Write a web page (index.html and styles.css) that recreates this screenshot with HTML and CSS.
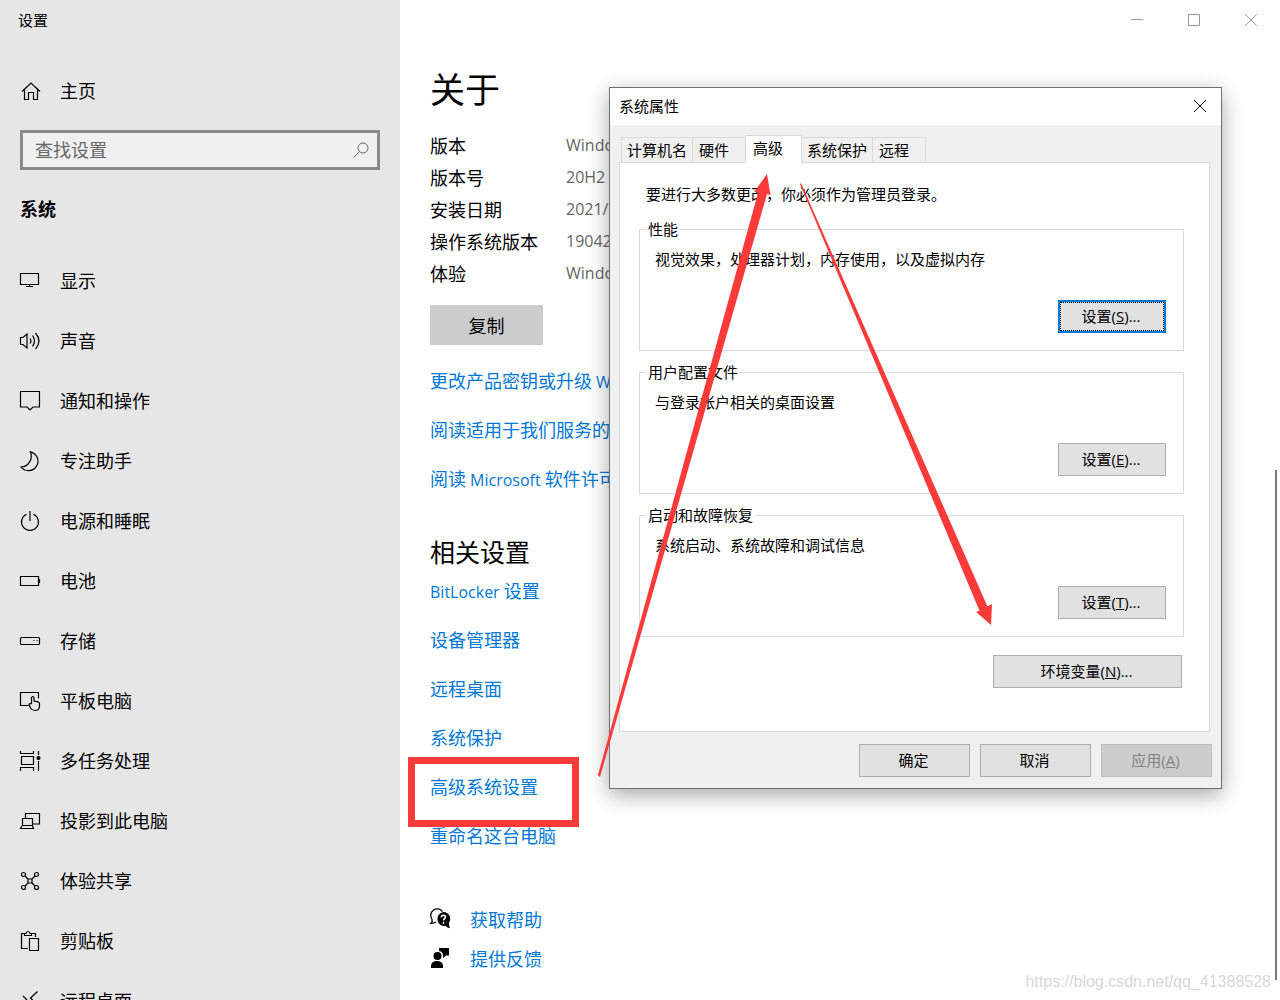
FILE: index.html
```html
<!DOCTYPE html>
<html lang="zh-CN">
<head>
<meta charset="utf-8">
<meta name="viewport" content="width=device-width, initial-scale=1">
<title>设置</title>
<link rel="stylesheet" href="styles.css">
</head>
<body>
<div class="app">
  <aside class="sidebar">
    <div class="app-title">设置</div>
    <a class="nav-item home" href="#home">
      <svg class="icon" viewBox="0 0 20 20"><path d="M2 10.500 11 2l9 8.500M4.500 8.500v10h4v-7h5v7h4v-10"/></svg>
      <span>主页</span>
    </a>
    <div class="search">
      <input class="search-input" type="text" placeholder="查找设置" aria-label="查找设置">
      <svg class="search-icon" viewBox="0 0 16 16"><circle cx="10" cy="6" r="5"/><path d="M6.500 9.500.5 15.500"/></svg>
    </div>
    <h2 class="section-title">系统</h2>
    <nav class="nav">
      <a class="nav-item" href="#display"><svg class="icon" viewBox="0 0 20 20"><path d="M.5 2.500h18v11H.5zM9.500 13.500v2M6 15.500h7"/></svg><span>显示</span></a>
      <a class="nav-item" href="#sound"><svg class="icon" viewBox="0 0 20 20"><path d="M.5 6.500h2.500L7 3v14l-4-3.500H.5zM10 7.500q2 2.500 0 5M12.500 4.500q4 5.500 0 11M15.500 2q7 8 0 16"/></svg><span>声音</span></a>
      <a class="nav-item" href="#notify"><svg class="icon" viewBox="0 0 20 20"><path d="M.5.5h19v15.500h-6.500l-3 3-3-3H.5z"/></svg><span>通知和操作</span></a>
      <a class="nav-item" href="#focus"><svg class="icon" viewBox="0 0 20 20"><path d="M10.300.8A9.500 9.500 0 1 1 1 16 10.800 10.800 0 0 0 10.300.8z"/></svg><span>专注助手</span></a>
      <a class="nav-item" href="#power"><svg class="icon" viewBox="0 0 20 20"><path d="M6.500 3.200a8.500 8.500 0 1 0 7 0M10 0v10"/></svg><span>电源和睡眠</span></a>
      <a class="nav-item" href="#battery"><svg class="icon" viewBox="0 0 20 20"><path d="M.5 5.500h18v9H.5zM19.500 8v4"/></svg><span>电池</span></a>
      <a class="nav-item" href="#storage"><svg class="icon" viewBox="0 0 20 20"><rect x=".5" y="6.500" width="19" height="7" rx="1"/><path d="M13.500 9.500h1M16.500 9.500h1"/></svg><span>存储</span></a>
      <a class="nav-item" href="#tablet"><svg class="icon" viewBox="0 0 20 20"><path d="M8.500 14.500h-8v-13h18v6M11.500 13V6.500q1.300-2 2.500 0V10l4 .8q1.500.4 1.500 2v2.200q0 4.500-4.500 4.500-3 0-4.500-2.500l-1.500-3.500q.6-1.500 2.500-.5"/></svg><span>平板电脑</span></a>
      <a class="nav-item" href="#multitask"><svg class="icon" viewBox="0 0 20 20"><path d="M1.500 5.500h12v8h-12zM.5 0v2.500h13V0M.5 20v-3.500h13V20M18.500 0v4M18.500 10v10"/><circle class="solid" cx="18.500" cy="7" r="1.500"/></svg><span>多任务处理</span></a>
      <a class="nav-item" href="#project"><svg class="icon" viewBox="0 0 20 20"><path d="M5.500 7V2.500h14v10.500H13M2.500 7.500h10v7h-10zM2 15l-1.500 2.500h13L12.500 15"/></svg><span>投影到此电脑</span></a>
      <a class="nav-item" href="#share"><svg class="icon" viewBox="0 0 20 20"><circle cx="3.500" cy="3.500" r="2"/><circle cx="16.500" cy="3.500" r="2"/><circle cx="3.500" cy="16.500" r="2"/><circle cx="16.500" cy="16.500" r="2"/><path d="M8 8h4v4H8zM5 5l3 3M15 5l-3 3M5 15l3-3M15 15l-3-3"/></svg><span>体验共享</span></a>
      <a class="nav-item" href="#clipboard"><svg class="icon" viewBox="0 0 20 20"><path d="M8 17.500H1.500v-15H5M11 2.500h4.500V6M9.500 7.500h9v12h-9zM4.500 4.500v-2H6q.3-2 2-2t2 2h1.500v2z"/></svg><span>剪贴板</span></a>
      <a class="nav-item" href="#remote"><svg class="icon" viewBox="0 0 20 20"><path d="m3 5 7 7-7 7M17.500.5l-7 6.500 7 7"/></svg><span>远程桌面</span></a>
    </nav>
  </aside>

  <main class="main">
    <div class="window-controls">
      <button class="window-button" type="button" aria-label="最小化"><svg viewBox="0 0 12 12"><path d="M0 5.500h12"/></svg></button>
      <button class="window-button" type="button" aria-label="最大化"><svg viewBox="0 0 12 12"><path d="M.5.5h11v11H.5z"/></svg></button>
      <button class="window-button" type="button" aria-label="关闭"><svg viewBox="0 0 12 12"><path d="m0 0 12 12M12 0 0 12"/></svg></button>
    </div>
    <h1 class="page-title">关于</h1>
    <table class="specs">
      <tr><th scope="row">版本</th><td>Windows</td></tr>
      <tr><th scope="row">版本号</th><td>20H2</td></tr>
      <tr><th scope="row">安装日期</th><td>2021/1</td></tr>
      <tr><th scope="row">操作系统版本</th><td>19042</td></tr>
      <tr><th scope="row">体验</th><td>Windows</td></tr>
    </table>
    <button class="copy-button" type="button">复制</button>
    <div class="links">
      <a href="#key">更改产品密钥或升级 <span class="latin">W</span></a>
      <a href="#terms">阅读适用于我们服务的</a>
      <a href="#license">阅读 <span class="latin">Microsoft</span> 软件许可</a>
    </div>
    <h2 class="related-title">相关设置</h2>
    <div class="links related">
      <a href="#bitlocker"><span class="latin">BitLocker</span> 设置</a>
      <a href="#devices">设备管理器</a>
      <a href="#rdp">远程桌面</a>
      <a href="#protect">系统保护</a>
      <a class="marked" href="#advanced">高级系统设置</a>
      <a href="#rename">重命名这台电脑</a>
    </div>
    <div class="support">
      <a href="#help"><svg class="support-icon" viewBox="0 0 21 20"><path class="line" d="M6 13q-2 1.300-5 1.300 1.800-1.500 1-4A6.300 6.300 0 1 1 12.500 2.500"/><path d="M13.300 3a6.700 6.700 0 0 1 5.700 10.500q-.5 3 1 5.700-2.500-.5-4.500-2.300A7 7 0 1 1 13.300 3z"/><path class="mark" d="M11.300 8.300q.3-2 2.200-2t2 1.800c0 1.600-2 1.600-2 3.500M13.500 13v1.700"/></svg><span>获取帮助</span></a>
      <a href="#feedback"><svg class="support-icon" viewBox="0 0 21 20"><circle cx="7.500" cy="8" r="4"/><path d="M1 20v-2.500Q1.500 13 7 13t6 4.500V20zM9 0h10v7.500h-3L13 10V7.500Q13 3.500 9 3z"/></svg><span>提供反馈</span></a>
    </div>
  </main>
  <div class="scroll-thumb"></div>
  <div class="watermark">https://blog.csdn.net/qq_41388528</div>
</div>

<section class="dialog" role="dialog" aria-labelledby="dialog-title">
  <header class="dialog-header">
    <span id="dialog-title">系统属性</span>
    <button class="dialog-close" type="button" aria-label="关闭"><svg viewBox="0 0 12 12"><path d="m0 0 12 12M12 0 0 12"/></svg></button>
  </header>
  <div class="dialog-body">
    <div class="tabs" role="tablist">
      <button class="tab" type="button" role="tab">计算机名</button>
      <button class="tab roomy" type="button" role="tab">硬件</button>
      <button class="tab selected" type="button" role="tab" aria-selected="true">高级</button>
      <button class="tab" type="button" role="tab">系统保护</button>
      <button class="tab roomy" type="button" role="tab">远程</button>
    </div>
    <div class="panel" role="tabpanel">
      <p class="notice">要进行大多数更改，你必须作为管理员登录。</p>
      <fieldset class="group">
        <legend>性能</legend>
        <p>视觉效果，处理器计划，内存使用，以及虚拟内存</p>
        <button class="button focused" type="button">设置(<u>S</u>)...</button>
      </fieldset>
      <fieldset class="group">
        <legend>用户配置文件</legend>
        <p>与登录帐户相关的桌面设置</p>
        <button class="button" type="button">设置(<u>E</u>)...</button>
      </fieldset>
      <fieldset class="group">
        <legend>启动和故障恢复</legend>
        <p>系统启动、系统故障和调试信息</p>
        <button class="button" type="button">设置(<u>T</u>)...</button>
      </fieldset>
      <button class="button wide" type="button">环境变量(<u>N</u>)...</button>
    </div>
    <footer class="dialog-footer">
      <button class="button" type="button">确定</button>
      <button class="button" type="button">取消</button>
      <button class="button" type="button" disabled>应用(<u>A</u>)</button>
    </footer>
  </div>
</section>

<svg class="arrows" width="400" height="610" viewBox="595 170 400 610" aria-hidden="true">
  <path d="M598 775 758.500 191l-4.500 1 13-18 3.500 21-3.500-1L600 777z"/>
  <path d="M801 183 987.500 606.500 992 604 991 625 976 612 979.500 610.700 800 184z"/>
</svg>
</body>
</html>
```

FILE: styles.css
```css
*, *::before, *::after {
  box-sizing: border-box;
}

body {
  margin: 0;
  color: #000;
  background: #fff;
  font: 18px/24px "Noto Sans CJK SC", sans-serif;
}

h1, h2, p {
  margin: 0;
  font-weight: 400;
}

a {
  text-decoration: none;
}

button, input {
  font: inherit;
}

svg {
  display: block;
  overflow: visible;
  fill: none;
  stroke: currentColor;
}

.app {
  position: relative;
  display: flex;
  height: 100vh;
  overflow: hidden;
}

/* Sidebar */
.sidebar {
  flex: 0 0 400px;
  padding: 0 20px;
  overflow: hidden;
  background: #e6e6e6;
}

.app-title {
  margin-left: -2px;
  font-size: 15px;
  line-height: 40px;
}

.nav-item {
  display: flex;
  align-items: center;
  gap: 20px;
  height: 60px;
  color: #000;
}

.nav-item span {
  padding-bottom: 2px;
}

.home {
  margin-top: 21px;
}

.icon {
  width: 20px;
  height: 20px;
  stroke-width: 1.2;
}

.icon .solid {
  fill: currentColor;
}

.search {
  display: flex;
  align-items: center;
  height: 40px;
  margin-top: 9px;
  padding: 0 8px 0 12px;
  border: 3px solid #8a8a8a;
  background: #f0f0f0;
}

.search-input {
  flex: 1;
  min-width: 0;
  padding: 0 0 2px;
  border: 0;
  outline: 0;
  background: transparent;
}

.search-input::placeholder {
  color: #666;
  opacity: 1;
}

.search-icon {
  width: 16px;
  height: 16px;
  color: #666;
}

.section-title {
  margin-bottom: 5px;
  font-size: 18px;
  font-weight: 700;
  line-height: 76px;
}

/* Main page */
.main {
  flex: 1;
  min-width: 0;
  padding-left: 30px;
  white-space: nowrap;
}

.window-controls {
  display: flex;
  justify-content: flex-end;
  padding-right: 1px;
}

.window-button {
  display: grid;
  place-items: center;
  width: 57px;
  height: 40px;
  padding: 0;
  border: 0;
  background: none;
  color: #999;
}

.window-button svg, .dialog-close svg {
  width: 12px;
  height: 12px;
}

.page-title {
  margin-top: 20px;
  font-size: 35px;
  line-height: 56px;
}

.specs {
  margin-top: 13px;
  border-collapse: collapse;
}

.specs th {
  width: 136px;
  height: 32px;
  padding: 0;
  font-weight: 400;
  text-align: left;
}

.specs td {
  padding: 0;
  color: #666;
  font-family: "Open Sans", sans-serif;
  font-size: 16px;
}

.latin {
  font-family: "Open Sans", sans-serif;
  font-size: 16px;
}

.copy-button {
  display: block;
  width: 113px;
  height: 40px;
  margin: 16px 0 11px;
  padding: 0;
  border: 0;
  background: #ccc;
}

.links {
  display: flex;
  flex-direction: column;
  align-items: flex-start;
}

.links a {
  height: 49px;
  color: #0078d7;
  line-height: 49px;
}

.related-title {
  margin-top: 33px;
  font-size: 25px;
  line-height: 30px;
}

.marked {
  position: relative;
}

.marked::after {
  content: "";
  position: absolute;
  top: -5px;
  left: -22px;
  width: 171px;
  height: 70px;
  border: 7px solid #fc3a3a;
}

.support {
  display: flex;
  flex-direction: column;
  align-items: flex-start;
  margin-top: 39px;
}

.support a {
  display: flex;
  align-items: center;
  gap: 19px;
  height: 39px;
  color: #0078d7;
}

.support-icon {
  width: 21px;
  height: 20px;
  fill: #000;
  stroke: none;
}

.support-icon .line {
  fill: none;
  stroke: #000;
  stroke-width: 1.3;
}

.support-icon .mark {
  fill: none;
  stroke: #fff;
  stroke-width: 1.6;
}

.scroll-thumb {
  position: absolute;
  right: 3px;
  bottom: 20px;
  width: 2px;
  height: 51%;
  background: #7a7a7a;
}

.watermark {
  position: absolute;
  right: 9px;
  bottom: 6px;
  color: #d8d8d8;
  font-family: "Liberation Sans", sans-serif;
  font-size: 16px;
}

/* Floating system properties window */
.dialog {
  position: absolute;
  top: 87px;
  left: 609px;
  width: 613px;
  border: 1px solid #707070;
  background: #f0f0f0;
  box-shadow: 0 6px 20px rgba(0, 0, 0, .35);
  font: 15px/20px "Open Sans", "Noto Sans CJK SC", sans-serif;
}

.dialog-header {
  display: flex;
  align-items: center;
  justify-content: space-between;
  height: 37px;
  padding: 0 0 2px 9px;
  background: #fff;
}

.dialog-close {
  display: grid;
  place-items: center;
  width: 42px;
  height: 34px;
  padding: 0;
  border: 0;
  background: none;
  color: #000;
}

.dialog-body {
  padding: 10px 9px 11px;
}

.tabs {
  display: flex;
  align-items: flex-end;
  padding-left: 2px;
}

.tab {
  height: 25px;
  margin-right: -1px;
  padding: 0 5px;
  border: 1px solid #dadada;
  border-bottom: 0;
  background: #f0f0f0;
  color: #000;
}

.roomy {
  padding: 0 16px 0 6px;
}

.selected {
  position: relative;
  height: 28px;
  margin-bottom: -1px;
  padding: 0 18px 3px 7px;
  background: #fff;
}

.panel {
  display: flex;
  flex-direction: column;
  height: 570px;
  margin-right: 2px;
  padding: 21px 25px 0 19px;
  border: 1px solid #dadada;
  background: #fff;
}

.notice {
  margin-bottom: 15px;
  padding-left: 7px;
}

.group {
  min-width: 0;
  height: 132px;
  margin: 0 0 11px;
  padding: 10px 17px 0 15px;
  border: 1px solid #dadada;
}

.group legend {
  margin-left: -9px;
  padding: 0 2px;
}

.button {
  width: 111px;
  height: 33px;
  padding: 0 2px 2px 0;
  border: 1px solid #adadad;
  background: #e1e1e1;
  color: #000;
}

.group .button {
  display: block;
  width: 108px;
  margin: 31px 0 0 auto;
}

.group .focused {
  border: 2px solid #0078d7;
  outline: 1px dotted #000;
  outline-offset: -3px;
}

.button:disabled {
  border-color: #bfbfbf;
  background: #ccc;
  color: #838383;
}

.wide {
  flex: none;
  width: 189px;
  margin: 7px 2px 0 auto;
}

.dialog-footer {
  display: flex;
  justify-content: flex-end;
  gap: 10px;
  margin-top: 12px;
}

.arrows {
  position: absolute;
  top: 170px;
  left: 595px;
  fill: #fc3a3a;
  stroke: none;
  pointer-events: none;
}
```
